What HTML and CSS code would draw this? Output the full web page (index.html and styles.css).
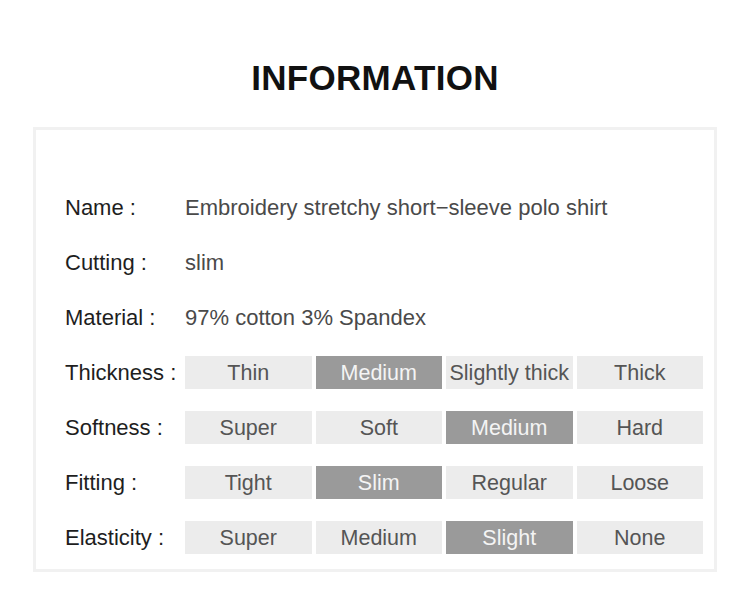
FILE: index.html
```html
<!DOCTYPE html>
<html>
<head>
<meta charset="utf-8">
<link rel="stylesheet" href="styles.css">
</head>
<body>
<div class="page">
  <h1 class="title">INFORMATION</h1>
  <div class="frame">
    <div class="grid">
      <div class="label">Name :</div>
      <div class="value">Embroidery stretchy short−sleeve polo shirt</div>

      <div class="label">Cutting :</div>
      <div class="value">slim</div>

      <div class="label">Material :</div>
      <div class="value">97% cotton 3% Spandex</div>

      <div class="label">Thickness :</div>
      <div class="cell">Thin</div>
      <div class="cell on">Medium</div>
      <div class="cell">Slightly thick</div>
      <div class="cell">Thick</div>

      <div class="label">Softness :</div>
      <div class="cell">Super</div>
      <div class="cell">Soft</div>
      <div class="cell on">Medium</div>
      <div class="cell">Hard</div>

      <div class="label">Fitting :</div>
      <div class="cell">Tight</div>
      <div class="cell on">Slim</div>
      <div class="cell">Regular</div>
      <div class="cell">Loose</div>

      <div class="label">Elasticity :</div>
      <div class="cell">Super</div>
      <div class="cell">Medium</div>
      <div class="cell on">Slight</div>
      <div class="cell">None</div>
    </div>
  </div>
</div>
</body>
</html>
```

FILE: styles.css
```css
html, body {
  margin: 0;
  padding: 0;
  background: #ffffff;
}

.page {
  width: 750px;
  height: 602px;
  font-family: "Liberation Sans", Arial, sans-serif;
  padding-top: 59px;
  box-sizing: border-box;
}

.title {
  margin: 0;
  text-align: center;
  font-size: 35px;
  line-height: 38px;
  font-weight: bold;
  color: #111111;
  letter-spacing: 0.3px;
}

.frame {
  margin: 30px 0 0 33px;
  width: 684px;
  height: 445px;
  box-sizing: border-box;
  border: 3px solid #f1f1f1;
  padding: 61px 11px 0 29px;
}

.grid {
  display: grid;
  grid-template-columns: 116px repeat(4, 1fr);
  grid-auto-rows: 33px;
  column-gap: 4px;
  row-gap: 22px;
}

.label {
  font-size: 22px;
  line-height: 33px;
  color: #1e1e1e;
  margin-right: -4px;
  white-space: nowrap;
}

.value {
  grid-column: 2 / 6;
  font-size: 22px;
  line-height: 33px;
  color: #4a4a4a;
  white-space: nowrap;
}

.cell {
  background: #ececec;
  color: #555555;
  font-size: 21.5px;
  line-height: 31px;
  padding-top: 2px;
  text-align: center;
  white-space: nowrap;
}

.cell.on {
  background: #9a9a9a;
  color: #f4f4f4;
}
```
